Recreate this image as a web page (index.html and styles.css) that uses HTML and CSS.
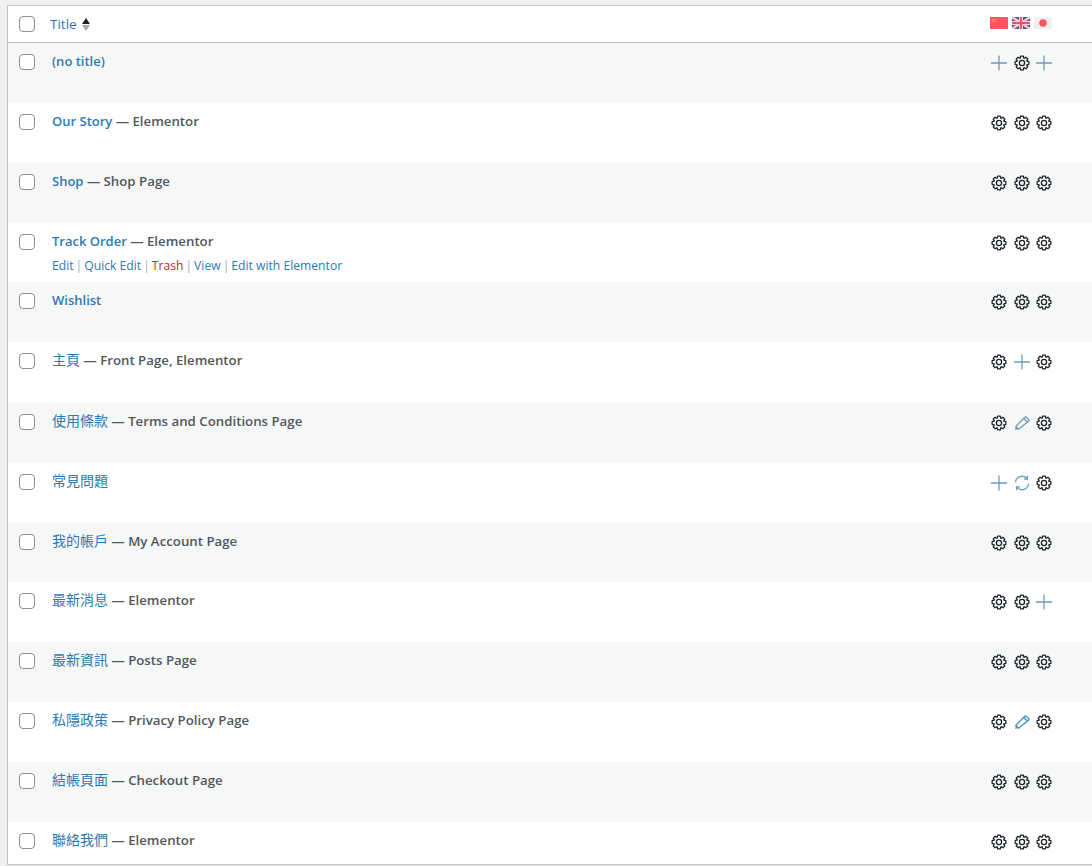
FILE: index.html
```html
<!DOCTYPE html>
<html lang="en">
<head>
<meta charset="utf-8">
<title>Pages</title>
<link rel="stylesheet" href="styles.css">
</head>
<body>
<svg class="defs" width="0" height="0" aria-hidden="true">
  <symbol id="gear" viewBox="0 0 16 16">
    <polygon class="gear-line" points="6.22,3.11 6.66,1.13 9.34,1.13 9.78,3.11 10.2,3.29 11.91,2.2 13.8,4.09 12.71,5.8 12.89,6.22 14.87,6.66 14.87,9.34 12.89,9.78 12.71,10.2 13.8,11.91 11.91,13.8 10.2,12.71 9.78,12.89 9.34,14.87 6.66,14.87 6.22,12.89 5.8,12.71 4.09,13.8 2.2,11.91 3.29,10.2 3.11,9.78 1.13,9.34 1.13,6.66 3.11,6.22 3.29,5.8 2.2,4.09 4.09,2.2 5.8,3.29"/>
    <circle class="gear-line" cx="8" cy="8" r="2.6"/>
  </symbol>
  <symbol id="plus" viewBox="0 0 16 16">
    <path class="blue-line" d="M0 8H16M8 .5V15.500"/>
  </symbol>
  <symbol id="pencil" viewBox="0 0 16 16">
    <path class="pencil-tip" d="M1 15 1.800 11.400 4.600 14.200Z"/>
    <path class="blue-line" d="M1.800 11.400 10.900 2.300A1 1 0 0 1 12.300 2.300L14.700 4.700A1 1 0 0 1 14.700 6.100L4.600 14.200ZM9.700 3.500 13.500 7.300"/>
  </symbol>
  <symbol id="sync" viewBox="0 0 16 16">
    <path class="blue-line" d="M1.400 7.200A6.600 6.600 0 0 1 12.800 3.400M13.400 .8V4.200H10M14.600 8.800A6.600 6.600 0 0 1 3.200 12.600M2.600 15.200V11.800H6"/>
  </symbol>
</svg>

<main class="list">
  <header class="head">
    <span class="box"></span>
    <span class="head-title">Title</span>
    <span class="sort"><i class="up"></i><i class="down"></i></span>
    <span class="flags">
      <svg class="flag" viewBox="0 0 18 12"><rect width="18" height="12" fill="#ff5561"/><circle cx="3.500" cy="3.500" r="1.500" fill="#fb9a50"/><circle cx="6.500" cy="2" r=".6" fill="#fb9a50"/><circle cx="7" cy="4.500" r=".6" fill="#fb9a50"/></svg>
      <svg class="flag" viewBox="0 0 18 12"><rect width="18" height="12" fill="#3f5c9a"/><path d="M0 0 18 12M18 0 0 12" stroke="#f9c6cb" stroke-width="2.400"/><path d="M9 0V12M0 6H18" stroke="#fff" stroke-width="4"/><path d="M9 0V12M0 6H18" stroke="#f2525f" stroke-width="2.400"/></svg>
      <svg class="flag" viewBox="0 0 18 12"><rect width="18" height="12" fill="#f0f0f0"/><circle cx="9" cy="6" r="3.800" fill="#fb5560"/></svg>
    </span>
  </header>

  <div class="row alt"><span class="box"></span><div class="cell"><a class="name">(no title)</a></div><div class="icons"><svg class="ico"><use href="#plus"/></svg><svg class="ico"><use href="#gear"/></svg><svg class="ico"><use href="#plus"/></svg></div></div>
  <div class="row"><span class="box"></span><div class="cell"><a class="name">Our Story</a><b class="state"> — Elementor</b></div><div class="icons"><svg class="ico"><use href="#gear"/></svg><svg class="ico"><use href="#gear"/></svg><svg class="ico"><use href="#gear"/></svg></div></div>
  <div class="row alt"><span class="box"></span><div class="cell"><a class="name">Shop</a><b class="state"> — Shop Page</b></div><div class="icons"><svg class="ico"><use href="#gear"/></svg><svg class="ico"><use href="#gear"/></svg><svg class="ico"><use href="#gear"/></svg></div></div>
  <div class="row short"><span class="box"></span><div class="cell"><a class="name">Track Order</a><b class="state"> — Elementor</b>
    <div class="actions"><a>Edit</a><i class="sep">|</i><a>Quick Edit</a><i class="sep">|</i><a class="trash">Trash</a><i class="sep">|</i><a>View</a><i class="sep">|</i><a>Edit with Elementor</a></div></div><div class="icons"><svg class="ico"><use href="#gear"/></svg><svg class="ico"><use href="#gear"/></svg><svg class="ico"><use href="#gear"/></svg></div></div>
  <div class="row alt"><span class="box"></span><div class="cell"><a class="name">Wishlist</a></div><div class="icons"><svg class="ico"><use href="#gear"/></svg><svg class="ico"><use href="#gear"/></svg><svg class="ico"><use href="#gear"/></svg></div></div>
  <div class="row tall"><span class="box"></span><div class="cell"><a class="name cjk">主頁</a><b class="state"> — Front Page, Elementor</b></div><div class="icons"><svg class="ico"><use href="#gear"/></svg><svg class="ico"><use href="#plus"/></svg><svg class="ico"><use href="#gear"/></svg></div></div>
  <div class="row alt"><span class="box"></span><div class="cell"><a class="name cjk">使用條款</a><b class="state"> — Terms and Conditions Page</b></div><div class="icons"><svg class="ico"><use href="#gear"/></svg><svg class="ico"><use href="#pencil"/></svg><svg class="ico"><use href="#gear"/></svg></div></div>
  <div class="row"><span class="box"></span><div class="cell"><a class="name cjk">常見問題</a></div><div class="icons"><svg class="ico"><use href="#plus"/></svg><svg class="ico"><use href="#sync"/></svg><svg class="ico"><use href="#gear"/></svg></div></div>
  <div class="row alt short"><span class="box"></span><div class="cell"><a class="name cjk">我的帳戶</a><b class="state"> — My Account Page</b></div><div class="icons"><svg class="ico"><use href="#gear"/></svg><svg class="ico"><use href="#gear"/></svg><svg class="ico"><use href="#gear"/></svg></div></div>
  <div class="row"><span class="box"></span><div class="cell"><a class="name cjk">最新消息</a><b class="state"> — Elementor</b></div><div class="icons"><svg class="ico"><use href="#gear"/></svg><svg class="ico"><use href="#gear"/></svg><svg class="ico"><use href="#plus"/></svg></div></div>
  <div class="row alt"><span class="box"></span><div class="cell"><a class="name cjk">最新資訊</a><b class="state"> — Posts Page</b></div><div class="icons"><svg class="ico"><use href="#gear"/></svg><svg class="ico"><use href="#gear"/></svg><svg class="ico"><use href="#gear"/></svg></div></div>
  <div class="row"><span class="box"></span><div class="cell"><a class="name cjk">私隱政策</a><b class="state"> — Privacy Policy Page</b></div><div class="icons"><svg class="ico"><use href="#gear"/></svg><svg class="ico vivid"><use href="#pencil"/></svg><svg class="ico"><use href="#gear"/></svg></div></div>
  <div class="row alt"><span class="box"></span><div class="cell"><a class="name cjk">結帳頁面</a><b class="state"> — Checkout Page</b></div><div class="icons"><svg class="ico"><use href="#gear"/></svg><svg class="ico"><use href="#gear"/></svg><svg class="ico"><use href="#gear"/></svg></div></div>
  <div class="row"><span class="box"></span><div class="cell"><a class="name cjk">聯絡我們</a><b class="state"> — Elementor</b></div><div class="icons"><svg class="ico"><use href="#gear"/></svg><svg class="ico"><use href="#gear"/></svg><svg class="ico"><use href="#gear"/></svg></div></div>
</main>
</body>
</html>
```
FILE: styles.css
```css
html, body {
  margin: 0;
  height: 866px;
  overflow: hidden;
  background: #f0f0f1;
}
body {
  padding: 5px 0 0 7px;
  box-sizing: border-box;
  font-family: "Open Sans", "Noto Sans CJK TC", sans-serif;
  font-size: 13px;
  color: #50575e;
}
.defs { position: absolute; }
.list {
  width: 1100px;
  height: 860px;
  box-sizing: border-box;
  overflow: hidden;
  border: 1px solid #c3c4c7;
  background: #fff;
}
.head {
  display: flex;
  align-items: center;
  height: 36px;
  padding-left: 11px;
  border-bottom: 1px solid #c3c4c7;
}
.box {
  flex: none;
  width: 16px;
  height: 16px;
  box-sizing: border-box;
  border: 1px solid #8c8f94;
  border-radius: 4px;
  background: #fff;
}
.head-title {
  margin-left: 15px;
  font-size: 13.500px;
  color: #2e7ab0;
}
.sort {
  display: flex;
  flex-direction: column;
  gap: 1px;
  margin-left: 5px;
}
.sort i {
  width: 0;
  height: 0;
  border-left: 4.500px solid transparent;
  border-right: 4.500px solid transparent;
}
.up { border-bottom: 6px solid #1d2327; }
.down { border-top: 6px solid #a7aaad; }
.flags {
  display: flex;
  gap: 4px;
  margin-left: auto;
  margin-right: 54px;
  margin-top: -2px;
}
.flag { display: block; width: 18px; height: 12px; }
.row {
  display: flex;
  align-items: flex-start;
  height: 60px;
  padding-left: 11px;
  background: #fff;
}
.row.alt { background: #f6f7f7; }
.row.short { height: 59px; }
.row.tall { height: 61px; }
.row > .box { margin-top: 11px; }
.cell {
  flex: 1;
  margin-left: 17px;
  padding-top: 9px;
  line-height: 18px;
  font-size: 13px;
}
.name { font-weight: 600; color: #2e7ab0; }
.name.cjk { font-size: 14px; font-weight: 400; }
.state { font-weight: 600; font-size: 13.250px; color: #50575e; }
.actions {
  margin-top: 7px;
  font-size: 12.150px;
  line-height: 18px;
}
.actions a { color: #2e7ab0; }
.actions .trash { color: #b32d2e; }
.sep {
  margin: 0 2px;
  font-style: normal;
  color: #a7aaad;
}
.icons {
  display: flex;
  gap: 6.200px;
  width: 106px;
  padding-top: 12px;
  flex: none;
  margin-right: 8.600px;
  margin-left: -7px;
}
.ico { display: block; width: 16px; height: 16px; flex: none; color: #6b9bbb; }
.ico.vivid { color: #3f8fc4; }
.gear-line { fill: none; stroke: #1d2327; stroke-width: 1.300; stroke-linejoin: round; }
.blue-line { fill: none; stroke: currentColor; stroke-width: 1.300; }
.pencil-tip { fill: #8c8f94; }
```
